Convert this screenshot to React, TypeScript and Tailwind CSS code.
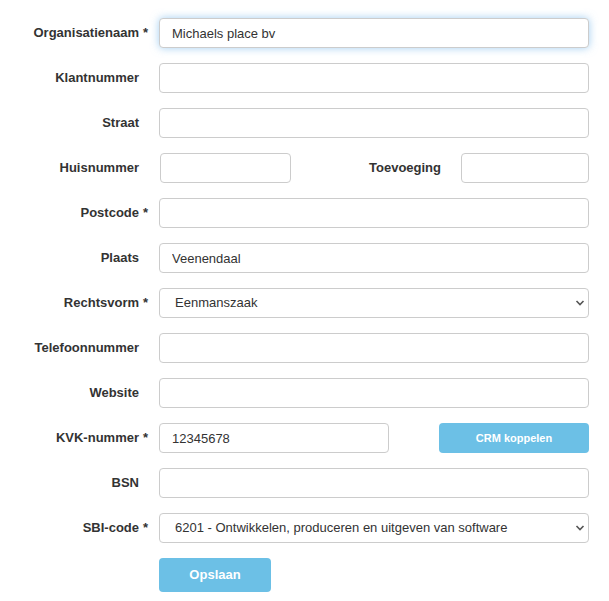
import { ReactNode } from 'react';

const inputCls =
  'h-[30px] rounded-[4px] border border-[#cccccc] bg-white px-[12px] text-[13px] text-[#333333] outline-none';

function Label({ text, required }: { text: string; required?: boolean }) {
  return (
    <div className="flex w-[159px] shrink-0 items-center">
      <span className="w-[139px] text-right text-[13px] font-bold text-[#333333]">{text}</span>
      <span className="pl-[4px] text-[13px] font-bold text-[#333333]">{required ? '*' : ''}</span>
    </div>
  );
}

function Row({ children }: { children: ReactNode }) {
  return <div className="flex h-[30px] items-center">{children}</div>;
}

function Select({ value }: { value: string }) {
  return (
    <div className="relative flex-1">
      <div className={inputCls + ' flex items-center pl-[15px]'}>{value}</div>
      <svg className="absolute right-[4px] top-[11px]" width="10" height="8" viewBox="0 0 10 8">
        <path d="M1.5 2 L5 5.5 L8.5 2" fill="none" stroke="#555" strokeWidth="1.6" />
      </svg>
    </div>
  );
}

export default function App() {
  return (
    <div className="min-h-screen bg-white font-['Liberation_Sans',Arial,sans-serif]">
      <div className="flex flex-col gap-[15px] pr-[20px] pt-[18px]">
        <Row>
          <Label text="Organisatienaam" required />
          <input
            className={inputCls + ' flex-1 border-[#66afe9] shadow-[0_0_8px_rgba(102,175,233,0.6)]'}
            defaultValue="Michaels place bv"
          />
        </Row>
        <Row>
          <Label text="Klantnummer" />
          <input className={inputCls + ' flex-1'} />
        </Row>
        <Row>
          <Label text="Straat" />
          <input className={inputCls + ' flex-1'} />
        </Row>
        <Row>
          <Label text="Huisnummer" />
          <input className={inputCls + ' ml-[1px] w-[131px]'} />
          <span className="flex-1 pr-[20px] text-right text-[13px] font-bold text-[#333333]">Toevoeging</span>
          <input className={inputCls + ' w-[128px]'} />
        </Row>
        <Row>
          <Label text="Postcode" required />
          <input className={inputCls + ' flex-1'} />
        </Row>
        <Row>
          <Label text="Plaats" />
          <input className={inputCls + ' flex-1'} defaultValue="Veenendaal" />
        </Row>
        <Row>
          <Label text="Rechtsvorm" required />
          <Select value="Eenmanszaak" />
        </Row>
        <Row>
          <Label text="Telefoonnummer" />
          <input className={inputCls + ' flex-1'} />
        </Row>
        <Row>
          <Label text="Website" />
          <input className={inputCls + ' flex-1'} />
        </Row>
        <Row>
          <Label text="KVK-nummer" required />
          <input className={inputCls + ' w-[230px]'} defaultValue="12345678" />
          <div className="flex-1" />
          <button className="h-[30px] w-[150px] rounded-[4px] bg-[#6cc0e6] text-[11px] font-bold text-white">
            CRM koppelen
          </button>
        </Row>
        <Row>
          <Label text="BSN" />
          <input className={inputCls + ' flex-1'} />
        </Row>
        <Row>
          <Label text="SBI-code" required />
          <Select value="6201 - Ontwikkelen, produceren en uitgeven van software" />
        </Row>
        <div className="flex">
          <div className="w-[159px] shrink-0" />
          <button className="h-[34px] w-[112px] rounded-[4px] bg-[#6cc0e6] text-[13px] font-bold text-white">
            Opslaan
          </button>
        </div>
      </div>
    </div>
  );
}
